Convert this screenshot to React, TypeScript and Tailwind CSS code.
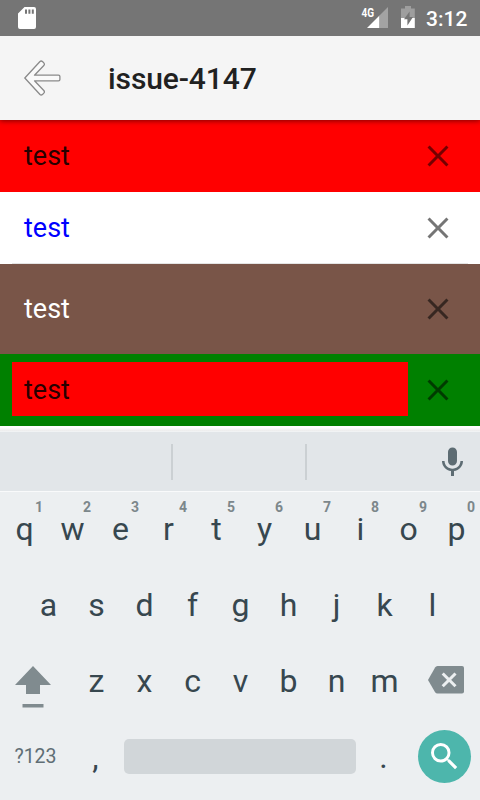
import type { ReactNode } from "react";

function CloseIcon() {
  return (
    <svg className="size-9 shrink-0 fill-black/54" viewBox="0 0 24 24">
      <path d="M19 6.41 17.59 5 12 10.59 6.41 5 5 6.41 10.59 12 5 17.59 6.41 19 12 13.41 17.59 19 19 17.59 13.41 12z" />
    </svg>
  );
}

function StatusBar() {
  return (
    <div className="relative z-20 flex h-9 bg-[#757575] text-white">
      <svg width="420" height="36" className="shrink-0">
        <path
          fill="#fff"
          fillRule="evenodd"
          d="M24.5 7H34a2 2 0 0 1 2 2v18a2 2 0 0 1-2 2H20a2 2 0 0 1-2-2V13.5zM25 9.5v4.2h2V9.5zm3.4 0v4.2h2V9.5zm3.4 0v4.2h2V9.5z"
        />
        <text x="361.6" y="17" fill="#fff" fontSize="13" fontWeight="700" textLength="12.6" lengthAdjust="spacingAndGlyphs">
          4G
        </text>
        <path fill="#fff" d="M367 28l12.5-12.5V28z" />
        <path fill="#a3a3a3" d="M379.5 15.5 388 7v21h-8.500z" />
        <path fill="#9e9e9e" d="M405 6h6v2.500h3.800V18H401V8.500h4z" />
        <path fill="#fff" d="M401 18h13.800v10H401z" />
        <path fill="#757575" d="M409.600 11.500v5.500h3.400l-5.600 8.500v-6.300H404z" />
      </svg>
      <div className="flex h-[38px] items-center pl-[6px] text-[21px] font-medium leading-[24px]">3:12</div>
    </div>
  );
}

function Header() {
  return (
    <header className="relative z-10 flex h-[84px] items-center bg-[#f5f5f5] pl-6 shadow-[0_1px_5px_rgba(0,0,0,0.5)]">
      <svg width="38" height="38" viewBox="0 0 38 38" className="shrink-0">
        <path
          d="M.8 19 16 2.500Q17.200 1.400 18.700 2.800L19.800 3.900Q21 5.300 19.800 6.500L10.500 16.200H34.500Q35.900 16.200 35.900 17.600V20.400Q35.900 21.800 34.500 21.800H10.500L19.800 31.500Q21 32.700 19.800 34.100L18.700 35.200Q17.200 36.600 16 35.500Z"
          fill="#fafafa"
          stroke="#8a8a8a"
          strokeWidth="1.300"
          strokeLinejoin="round"
        />
      </svg>
      <h1 className="mt-px ml-[46px] text-[30px] font-medium leading-[35px] tracking-[-0.1px] text-[#212121]">
        issue-4147
      </h1>
    </header>
  );
}

function Field({ className, children }: { className: string; children: ReactNode }) {
  return (
    <div className={`flex items-center justify-between pr-6 pl-3 text-[27px] leading-[28px] ${className}`}>
      {children}
      <CloseIcon />
    </div>
  );
}

function Key({ label, hint }: { label: string; hint?: string }) {
  return (
    <div className="relative flex w-12 items-center justify-center pl-px">
      {label}
      {hint && (
        <span className="absolute top-[9px] left-[30px] w-[18px] text-center text-[14px] font-bold leading-[14px] text-[#7c878b]">
          {hint}
        </span>
      )}
    </div>
  );
}

function Keyboard() {
  return (
    <div className="h-[309px] border-t border-[#f9fafb] bg-[#eceff1] text-[32px] leading-none text-[#37474f]">
      <div className="-mt-px flex h-[76px]">
        {"qwertyuiop".split("").map((k, i) => (
          <Key key={k} label={k} hint={String((i + 1) % 10)} />
        ))}
      </div>
      <div className="flex h-[76px] pl-6">
        {"asdfghjkl".split("").map((k) => (
          <Key key={k} label={k} />
        ))}
      </div>
      <div className="flex h-[76px]">
        <svg width="72" height="76" className="fill-[#808b8f]">
          <path d="M33 23 51 42H40v9H26v-9H15z" />
          <path d="M22.500 61h21v3.500h-21z" />
        </svg>
        {"zxcvbnm".split("").map((k) => (
          <Key key={k} label={k} />
        ))}
        <svg width="72" height="76">
          <path
            fill="#808b8f"
            d="M29.500 23H54a2 2 0 0 1 2 2v23.500a2 2 0 0 1-2 2H29.500a3 3 0 0 1-2.400-1.300L20 37l7.100-12.500A3 3 0 0 1 29.500 23z"
          />
          <path d="m34.700 30.500 12.800 12.800m0-12.800L34.700 43.300" stroke="#eceff1" strokeWidth="3" />
        </svg>
      </div>
      <div className="flex h-[76px] items-center">
        <span className="-mt-px w-[71px] text-center text-[19.500px] text-[#5f6e75]">?123</span>
        <Key label="," />
        <div className="-mt-px ml-[5px] h-[35px] w-[232px] rounded-[5px] bg-[#d1d6d9]" />
        <div className="ml-[3px]">
          <Key label="." />
        </div>
        <div className="-mt-px ml-[11px] flex size-[53px] items-center justify-center rounded-full bg-[#4db6ac]">
          <svg className="size-9 fill-white" viewBox="0.33 0.33 24 24">
            <path d="M15.500 14h-.79l-.28-.27A6.471 6.471 0 0 0 16 9.500 6.500 6.500 0 1 0 9.500 16c1.610 0 3.090-.59 4.230-1.570l.27.28v.79l5 4.990L20.490 19zm-6 0C7.010 14 5 11.990 5 9.500S7.010 5 9.500 5 14 7.010 14 9.500 11.990 14 9.500 14z" />
          </svg>
        </div>
      </div>
    </div>
  );
}

export default function App() {
  return (
    <div className="h-[800px] w-[480px] overflow-hidden bg-white font-['Roboto',sans-serif]">
      <StatusBar />
      <Header />
      <Field className="h-[72px] bg-[#ff0000] text-black/87">
        <span className="pl-3">test</span>
      </Field>
      <div className="h-[72px]">
        <Field className="h-[72px] text-[#0000ff]">
          <span className="pl-3">test</span>
        </Field>
        <div className="mx-3 -mt-px h-px bg-[#e4e4e4]" />
      </div>
      <Field className="h-[90px] bg-[#795548] text-white">
        <span className="pl-3">test</span>
      </Field>
      <Field className="h-[72px] bg-[#008000] text-black/87">
        <span className="-mt-0.5 flex h-[54px] w-[396px] items-center bg-[#ff0000] pt-0.5 pl-3">test</span>
        <span className="w-3" />
      </Field>
      <div className="h-1.5 border-b border-[#f1f3f4] bg-linear-to-b from-white from-30% to-[#ececec]" />
      <div className="flex h-[59px] items-center bg-[#e2e6e9]">
        <div className="mt-px ml-[171px] h-9 w-0.5 bg-[#cbd0d3]" />
        <div className="mt-px ml-[132px] h-9 w-0.5 bg-[#cbd0d3]" />
        <svg className="mt-px ml-[127px] size-9 fill-[#5d6c73]" viewBox="-0.33 -0.33 24 24">
          <path d="M12 14c1.660 0 2.990-1.340 2.990-3L15 5c0-1.660-1.340-3-3-3S9 3.340 9 5v6c0 1.660 1.340 3 3 3zm5.300-3c0 3-2.540 5.100-5.300 5.100S6.700 14 6.700 11H5c0 3.410 2.720 6.230 6 6.720V21h2v-3.280c3.280-.48 6-3.300 6-6.720z" />
        </svg>
      </div>
      <Keyboard />
    </div>
  );
}
